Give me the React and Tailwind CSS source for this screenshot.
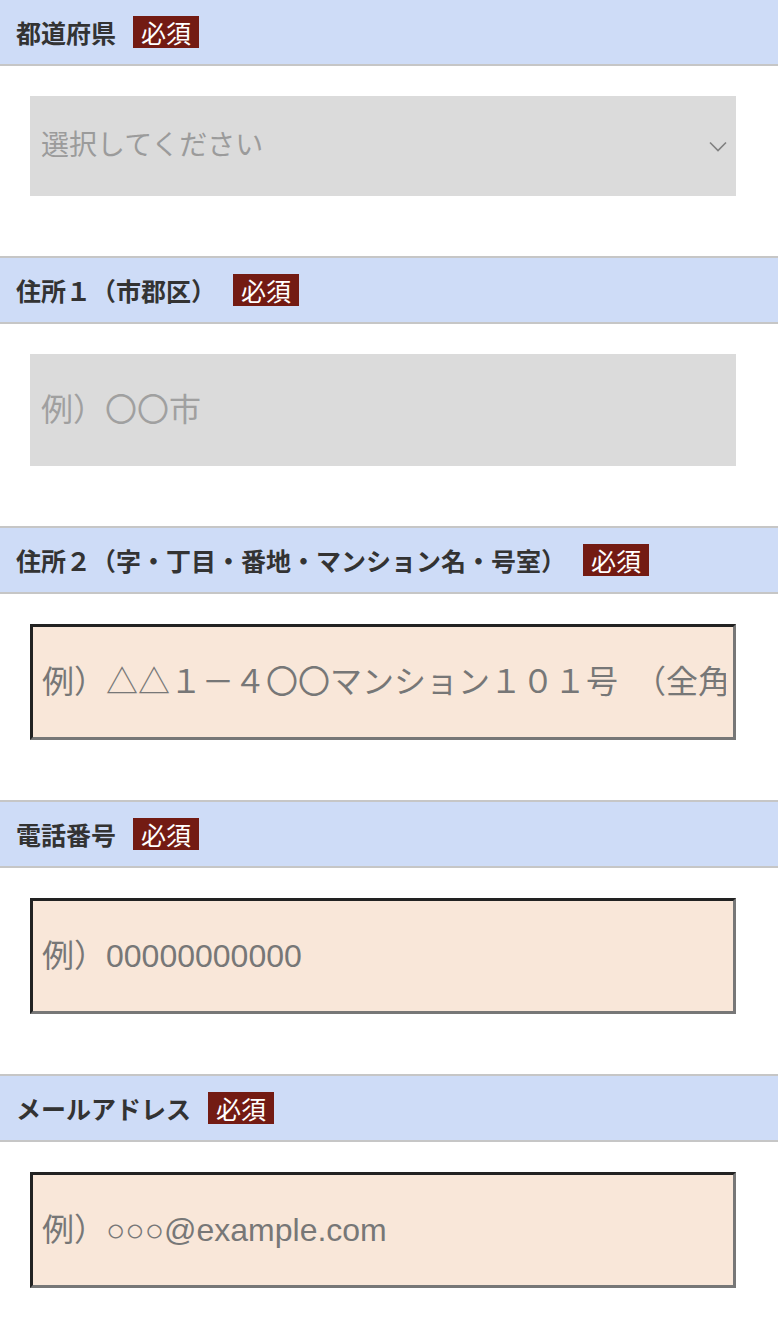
import React from "react";

const font = { fontFamily: '"Liberation Sans", "Noto Sans CJK JP", sans-serif' };

const SectionHeader = ({ label, first }) => (
  <div
    className={`flex items-center h-[68px] border-y-2 border-[#c6c6c6] bg-[#cedcf7] pl-4 ${
      first ? "-mt-[2px]" : ""
    }`}
  >
    <span className="text-[25px] font-bold text-[#333] leading-none" style={{ fontFamily: '"Noto Sans CJK JP", sans-serif' }}>
      {label}
    </span>
    <span
      className="ml-[17px] flex items-center h-8 px-2 bg-[#731b13] text-white text-[25px] leading-none"
      style={{ fontFamily: '"Noto Sans CJK JP", sans-serif' }}
    >
      必須
    </span>
  </div>
);

const PeachInput = ({ placeholder }) => (
  <input
    type="text"
    placeholder={placeholder}
    className="block w-[706px] h-[116px] bg-[#f9e7d9] border-[3px] border-t-[#222] border-l-[#222] border-r-[#777] border-b-[#777] pl-[9px] pr-[7px] text-[32px] text-[#777] placeholder:text-[#777] outline-none"
    style={font}
  />
);

export default function App() {
  return (
    <div className="w-[778px] bg-white overflow-hidden">
      <SectionHeader label="都道府県" first />
      <div className="pt-[30px] pb-[60px] px-[30px]">
        <div className="relative w-[706px] h-[100px]">
          <select
            className="appearance-none w-full h-full bg-[#dbdbdb] pl-[11px] text-[28px] text-[#9b9b9b] outline-none"
            style={font}
            defaultValue=""
          >
            <option value="">選択してください</option>
          </select>
          <svg
            className="absolute right-[9px] top-[45px] pointer-events-none"
            width="18"
            height="11"
            viewBox="0 0 18 11"
            fill="none"
          >
            <path d="M1 1.5L9 9.5L17 1.5" stroke="#808080" strokeWidth="1.6" />
          </svg>
        </div>
      </div>

      <SectionHeader label="住所１（市郡区）" />
      <div className="pt-[30px] pb-[60px] px-[30px]">
        <input
          type="text"
          placeholder="例）〇〇市"
          className="block w-[706px] h-[112px] bg-[#dbdbdb] pl-[11px] text-[32px] text-[#a0a0a0] placeholder:text-[#a0a0a0] outline-none"
          style={font}
        />
      </div>

      <SectionHeader label="住所２（字・丁目・番地・マンション名・号室）" />
      <div className="pt-[30px] pb-[60px] px-[30px]">
        <PeachInput placeholder="例）△△１－４〇〇マンション１０１号　（全角）" />
      </div>

      <SectionHeader label="電話番号" />
      <div className="pt-[30px] pb-[60px] px-[30px]">
        <PeachInput placeholder="例）00000000000" />
      </div>

      <SectionHeader label="メールアドレス" />
      <div className="pt-[30px] pb-[60px] px-[30px]">
        <PeachInput placeholder="例）○○○@example.com" />
      </div>
    </div>
  );
}
